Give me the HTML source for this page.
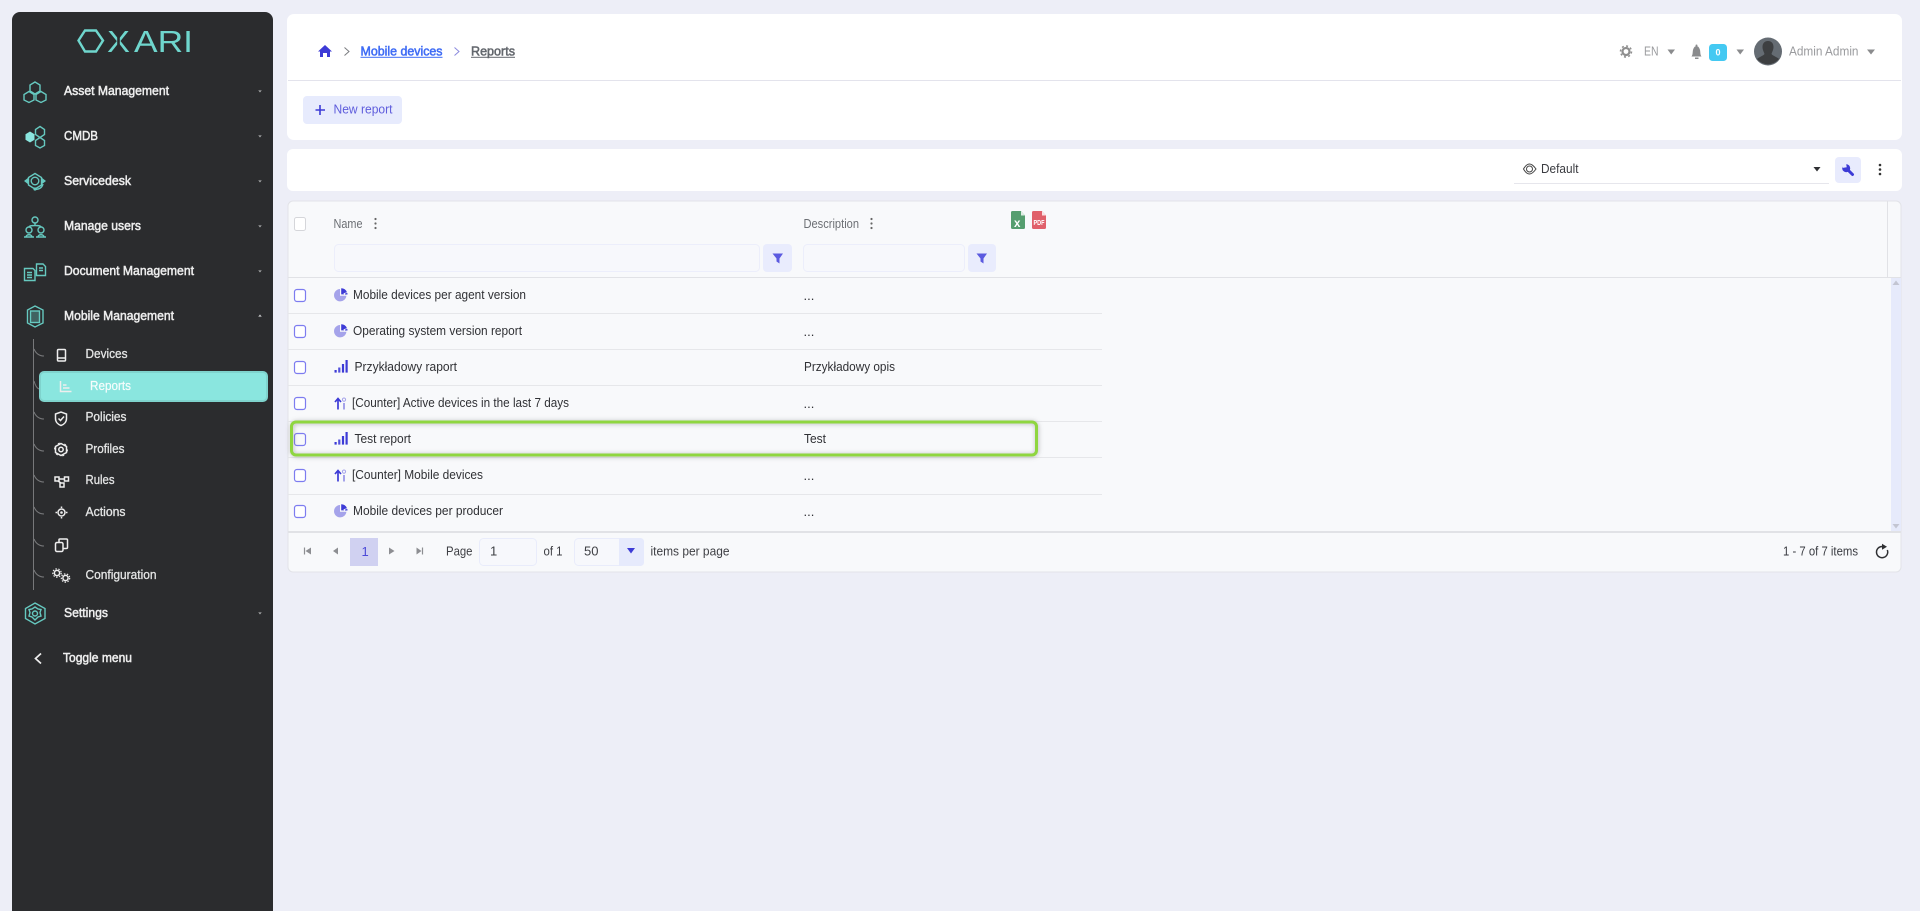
<!DOCTYPE html>
<html lang="en">
<head>
<meta charset="utf-8">
<title>Reports</title>
<style>
html,body{margin:0;padding:0;width:1920px;height:911px;overflow:hidden;background:#edeef7;}
svg{position:absolute;left:0;top:0;display:block;font-family:"Liberation Sans",sans-serif;}
.m{font-size:13px;fill:#eeeeee;stroke:#eeeeee;stroke-width:.5px;}
.s{font-size:13px;fill:#e4e5e5;stroke:#e4e5e5;stroke-width:.3px;}
.t{font-size:13px;fill:#303135;}
.h{font-size:12.5px;fill:#6c6f74;}
.f{font-size:13px;fill:#3e3f44;}
.i{fill:none;stroke:#66c9c0;stroke-width:1.4;}
.w{fill:none;stroke:#eeeeee;stroke-width:1.5;}
.ln{stroke:#e6e7ea;stroke-width:1;}
.cb{fill:#fff;stroke:#7d7cf0;stroke-width:1.2;}
.br{stroke:#77787a;stroke-width:1;fill:none;}
</style>
</head>
<body>
<svg width="1920" height="911" viewBox="0 0 1920 911" xmlns="http://www.w3.org/2000/svg">
<defs>
<filter id="sh" x="-5%" y="-40%" width="110%" height="180%"><feGaussianBlur stdDeviation="2.5"/></filter>
<g id="pieI"><path d="M6 1A6.200 6.200 0 1 0 12.400 7.800L6 7.800Z" fill="#a5a3ea"/><path d="M7.200 0.300A6.500 6.500 0 0 1 13 4.200L9.500 5.200L10 6.400H7.200Z" fill="#3d3bd6"/><path d="M10.800 5.600L13.300 4.900A6 6 0 0 1 13.500 6.500H11Z" fill="#3d3bd6"/></g>
<g id="bars"><rect x="0" y="10" width="2.200" height="2.600" fill="#3d3bd6"/><rect x="3.700" y="7.500" width="2.200" height="5.100" fill="#5250dc"/><rect x="7.400" y="4" width="2.200" height="8.600" fill="#3d3bd6"/><rect x="11" y="0" width="2.200" height="12.600" fill="#3d3bd6"/></g>
<g id="cnt"><path d="M4 12.500V2.500M1 5L4 1.500L7 5" fill="none" stroke="#3d3bd6" stroke-width="1.700"/><circle cx="10" cy="2.600" r="1.600" fill="none" stroke="#a5a3ea" stroke-width="1"/><path d="M10 6V12.500" stroke="#a5a3ea" stroke-width="2"/></g>
<path id="chev" d="M-1.200 -.8L0 .8L1.200 -.8" fill="none" stroke="#a9aaab" stroke-width=".9"/>
</defs>

<!-- sidebar -->
<rect x="12" y="12" width="261" height="915" rx="8" fill="#2b2c2e"/>
<path d="M85 30.500H96L103 40.500L96 51.500H85L78.500 40.500Z" fill="none" stroke="#6fd6cd" stroke-width="2.400"/>
<text x="107" y="52" font-size="31" fill="#6fd6cd" textLength="23" lengthAdjust="spacingAndGlyphs">X</text>
<rect x="117.200" y="28" width="2.600" height="26" fill="#2b2c2e"/>
<text x="134" y="52" font-size="31" fill="#6fd6cd" textLength="59" lengthAdjust="spacingAndGlyphs">ARI</text>

<!-- main menu icons -->
<g class="i">
<path d="M35 82L40 85V91L35 94L30 91V85Z"/><path d="M29 91.500L34 94.500V100L29 102.500L24 100V94.500Z"/><path d="M41 91.500L46 94.500V100L41 102.500L36 100V94.500Z"/>
<path d="M40 126.500L44.500 129.500V134.500L40 137.500L35.500 134.500V129.500Z"/><path d="M40 137.500L44.500 140.500V145.500L40 148L35.500 145.500V140.500Z"/>
<path d="M35 173.500L41.500 177.500V185L35 189L28.500 185V177.500Z"/><circle cx="35" cy="181" r="3.800"/><path d="M35 189.500C39 189.500 42 188 43 184"/>
<circle cx="35" cy="220" r="3"/><circle cx="29" cy="230" r="3"/><circle cx="41" cy="230" r="3"/><path d="M35 223V225M29 227C29 225 41 225 41 227M24 237H34M36 237H46M26 237C26 234 32 234 32 237M38 237C38 234 44 234 44 237"/>
<path d="M24.500 268.500H33L35 270.500V280.500H24.500Z"/><path d="M27 272.500H32M27 275H32M27 277.500H32"/><path d="M36.500 264H43L45.500 266.500V275.500H36.500Z"/><path d="M39 268H43M39 270.500H43"/>
<path d="M35 306L43 310V323L35 327L27.500 323V310Z"/><rect x="30.500" y="311" width="9" height="11.500" fill="#66c9c0" fill-opacity=".35"/>
<path d="M35 603L45 608.500V618.500L35 624L25.500 618.500V608.500Z"/><circle cx="35" cy="613.500" r="2.500"/><path d="M35 607L38 609L41 609.500L40 612.500L41 616L38 617L35 620L32 617L29 616L30 612.500L29 609.500L32 609Z"/>
</g>
<path d="M30 131.500L34.500 134.200V139.800L30 142.500L25.500 139.800V134.200Z" fill="#8ae6df"/>
<path d="M28.500 177.500L24 181L28.500 184.500ZM41.500 177.500L46 181L41.500 184.500Z" fill="#66c9c0"/>
<circle cx="35" cy="189" r="1.600" fill="#66c9c0"/>

<text class="m" x="64" y="95" textLength="105" lengthAdjust="spacingAndGlyphs">Asset Management</text>
<text class="m" x="64" y="140" textLength="34" lengthAdjust="spacingAndGlyphs">CMDB</text>
<text class="m" x="64" y="185" textLength="67" lengthAdjust="spacingAndGlyphs">Servicedesk</text>
<text class="m" x="64" y="230" textLength="77" lengthAdjust="spacingAndGlyphs">Manage users</text>
<text class="m" x="64" y="275" textLength="130" lengthAdjust="spacingAndGlyphs">Document Management</text>
<text class="m" x="64" y="320" textLength="110" lengthAdjust="spacingAndGlyphs">Mobile Management</text>
<text class="m" x="64" y="617" textLength="44" lengthAdjust="spacingAndGlyphs">Settings</text>
<text class="m" x="63" y="662" textLength="69" lengthAdjust="spacingAndGlyphs">Toggle menu</text>
<path d="M41 653.500L35.500 658.500L41 663.500" fill="none" stroke="#eeeeee" stroke-width="1.700"/>
<use href="#chev" x="260" y="91"/><use href="#chev" x="260" y="136"/><use href="#chev" x="260" y="181"/><use href="#chev" x="260" y="226"/><use href="#chev" x="260" y="271"/><use href="#chev" x="260" y="613"/>
<path d="M258.800 316.800L260 315.200L261.200 316.800" fill="none" stroke="#c5c6c7" stroke-width="1"/>

<!-- tree -->
<path class="br" d="M33.500 339V590"/>
<path class="br" d="M34 349Q37 356 44 356"/><path class="br" d="M34 381Q36 388 39 389"/><path class="br" d="M34 412Q37 419 44 419"/><path class="br" d="M34 444Q37 451 44 451"/><path class="br" d="M34 475Q37 482 44 482"/><path class="br" d="M34 507Q37 514 44 514"/><path class="br" d="M34 539Q37 546 44 546"/><path class="br" d="M34 570Q37 577 44 577"/>

<rect x="40" y="372" width="227" height="29" rx="4" fill="#8ae6df" stroke="#7fd3cd" stroke-width="2"/>

<!-- sub icons -->
<g class="w">
<rect x="57.500" y="349.500" width="8" height="11.500" rx="1"/>
<path d="M57.500 358H65.500"/>
<path d="M60.500 381V391.500H71.500M63 385H66.500M63 388H69.500"/>
<path d="M55.500 414L61 412L66.500 414V418.500C66.500 422 64 424.500 61 425.500C58 424.500 55.500 422 55.500 418.500Z"/><path d="M58.500 418.500L60.500 420.500L64 416.500"/>
<path d="M61 443.500L66.500 446.500V452.500L61 455.500L55.500 452.500V446.500Z"/><circle cx="61" cy="449.500" r="2.200"/>
<rect x="55" y="477" width="4" height="4"/><rect x="64.500" y="477" width="4" height="4"/><rect x="60" y="483" width="4" height="4"/><path d="M59 479H64.500M58 481L61 483"/>
<circle cx="61.500" cy="512.500" r="3.500"/>
<path d="M61.500 506.500V508M61.500 517V518.500M55.500 512.500H57M66 512.500H67.500"/>
<rect x="55.500" y="542.500" width="7.500" height="9" rx="1.500"/><path d="M59 542V539.500Q59 539 60 539H66.500Q67.500 539 67.500 540V547.500Q67.500 548.500 66 548.500H63"/>
<circle cx="57" cy="573" r="2.600"/><circle cx="65.500" cy="578" r="2.600"/>
</g>
<circle cx="57" cy="573" r="4.200" fill="none" stroke="#eee" stroke-width="1.200" stroke-dasharray="1.500 1.500"/>
<circle cx="65.500" cy="578" r="4.200" fill="none" stroke="#eee" stroke-width="1.200" stroke-dasharray="1.500 1.500"/>
<circle cx="61.500" cy="512.500" r="1.300" fill="#eee"/>
<circle cx="61" cy="449.500" r="6.500" fill="none" stroke="#eee" stroke-width="1" stroke-dasharray="2 4.800"/>

<text class="s" x="85.500" y="358" textLength="42" lengthAdjust="spacingAndGlyphs">Devices</text>
<text x="90" y="390" font-size="13" fill="#f6fdfc" stroke="#f6fdfc" stroke-width=".2" textLength="41" lengthAdjust="spacingAndGlyphs">Reports</text>
<text class="s" x="85.500" y="421" textLength="41" lengthAdjust="spacingAndGlyphs">Policies</text>
<text class="s" x="85.500" y="453" textLength="39" lengthAdjust="spacingAndGlyphs">Profiles</text>
<text class="s" x="85.500" y="484" textLength="29" lengthAdjust="spacingAndGlyphs">Rules</text>
<text class="s" x="85.500" y="516" textLength="40" lengthAdjust="spacingAndGlyphs">Actions</text>
<text class="s" x="85.500" y="579" textLength="71" lengthAdjust="spacingAndGlyphs">Configuration</text>

<!-- header card -->
<rect x="287" y="14" width="1615" height="126" rx="7" fill="#fff"/>
<rect x="288" y="80" width="1613" height="1" fill="#e3e3ec"/>
<path d="M325 45L332 51.500H330V57H327V53H323V57H320V51.500H318Z" fill="#3d3bd6"/>
<path d="M344.500 47.500L349 51.500L344.500 55.500" fill="none" stroke="#7a7c80" stroke-width="1"/>
<text x="360.500" y="55.500" font-size="13" fill="#3f6cf5" stroke="#3f6cf5" stroke-width=".55" textLength="82" lengthAdjust="spacingAndGlyphs">Mobile devices</text>
<rect x="360.500" y="56.800" width="82" height="1" fill="#3f6cf5"/>
<path d="M454.500 47.500L459 51.500L454.500 55.500" fill="none" stroke="#8b8ade" stroke-width="1"/>
<text x="471" y="55.500" font-size="13" fill="#63676d" stroke="#63676d" stroke-width=".55" textLength="44" lengthAdjust="spacingAndGlyphs">Reports</text>
<rect x="471" y="56.800" width="44" height="1" fill="#63676d"/>

<rect x="303" y="96" width="99" height="28" rx="4" fill="#e7ebfd"/>
<path d="M320 105V115M315.500 110H325" stroke="#3d3bd6" stroke-width="1.600"/>
<text x="333.500" y="113.500" font-size="13" fill="#5e5cdc" textLength="59" lengthAdjust="spacingAndGlyphs">New report</text>

<!-- top right -->
<circle cx="1626" cy="51.500" r="3.500" fill="none" stroke="#8f8f8f" stroke-width="2.200"/>
<circle cx="1626" cy="51.500" r="5.500" fill="none" stroke="#8f8f8f" stroke-width="1.500" stroke-dasharray="2 2.300"/>
<text x="1644" y="55.500" font-size="13" fill="#9a9b9e" textLength="14.500" lengthAdjust="spacingAndGlyphs">EN</text>
<path d="M1667.500 49.500H1675L1671.200 54.500Z" fill="#8a8b8d"/>
<path d="M1691.500 56.500C1693 54.500 1692.500 52 1693 50C1693.500 47.800 1695 46 1696.500 46C1698 46 1699.500 47.800 1700 50C1700.500 52 1700 54.500 1701.500 56.500Z" fill="#8a8b8d"/><rect x="1695" y="57.500" width="3.500" height="1.500" fill="#8a8b8d"/><circle cx="1696.500" cy="45.500" r="1" fill="#8a8b8d"/>
<rect x="1709" y="44" width="18" height="17" rx="3.500" fill="#44c9f2"/>
<text x="1715.500" y="55.500" font-size="9" font-weight="700" fill="#fff">0</text>
<path d="M1736.500 49.500H1744L1740.200 54.500Z" fill="#8a8b8d"/>
<circle cx="1768" cy="51.500" r="14" fill="#656c73"/>
<path d="M1768 41C1772 41 1773.500 44 1773.500 47C1773.500 50 1772 52 1771.500 54C1773 56 1777 57 1779 59A14 14 0 0 1 1757 59C1759 57 1763 56 1764.500 54C1764 52 1762.500 50 1762.500 47C1762.500 44 1764 41 1768 41Z" fill="#3d3f41"/>
<text x="1789" y="55.500" font-size="13" fill="#9a9b9e" textLength="69.500" lengthAdjust="spacingAndGlyphs">Admin Admin</text>
<path d="M1867 49.500H1875L1871 54.500Z" fill="#8a8b8d"/>

<!-- toolbar card -->
<rect x="287" y="149" width="1615" height="42" rx="6" fill="#fff"/>
<path d="M1523.500 169C1525.500 165.500 1527.500 164 1529.500 164C1531.500 164 1533.500 165.500 1536 169C1533.500 172.500 1531.500 174 1529.500 174C1527.500 174 1525.500 172.500 1523.500 169Z" fill="none" stroke="#444" stroke-width="1"/>
<circle cx="1529.500" cy="169" r="3" fill="none" stroke="#444" stroke-width="1"/>
<text x="1541" y="173" font-size="13" fill="#3a3b40" textLength="37.500" lengthAdjust="spacingAndGlyphs">Default</text>
<path d="M1813.500 167H1820.500L1817 171.500Z" fill="#2f3033"/>
<rect x="1514" y="183" width="315" height="1" fill="#e6e6ec"/>
<rect x="1835" y="157" width="26" height="26" rx="4" fill="#e8ebfd"/>
<circle cx="1846.200" cy="168.200" r="4" fill="#3d3bd6"/>
<path d="M1847.500 169.500L1852.500 174.500" stroke="#3d3bd6" stroke-width="3" stroke-linecap="round"/>
<path d="M1842.500 163.500L1846.500 163.800L1846.500 167.500L1842.500 167.500Z" transform="rotate(-10 1845 166)" fill="#e8ebfd"/>
<circle cx="1880" cy="165" r="1.300" fill="#333"/><circle cx="1880" cy="169.500" r="1.300" fill="#333"/><circle cx="1880" cy="174" r="1.300" fill="#333"/>

<!-- grid -->
<rect x="288" y="201" width="1613" height="371" rx="5" fill="#f8f9fb" stroke="#e2e3e8" stroke-width="1"/>
<rect x="288" y="277" width="1613" height="1" fill="#e1e2e6"/>
<rect x="1887" y="201" width="1" height="76" fill="#e1e2e6"/>
<rect x="1891" y="278" width="10" height="253" fill="#e6eafb"/>
<path d="M1892.500 285H1899.500L1896 280.500Z" fill="#c3c5d2"/>
<path d="M1892.500 524H1899.500L1896 528.500Z" fill="#c3c5d2"/>
<rect x="288" y="531" width="1613" height="2" fill="#e1e2e6"/>

<!-- head -->
<rect x="294.500" y="217.500" width="11" height="13" rx="2" fill="#fff" stroke="#d5d6da" stroke-width="1"/>
<text class="h" x="333.500" y="228" textLength="29" lengthAdjust="spacingAndGlyphs">Name</text>
<circle cx="375.500" cy="219" r="1.100" fill="#666"/><circle cx="375.500" cy="223.500" r="1.100" fill="#666"/><circle cx="375.500" cy="228" r="1.100" fill="#666"/>
<rect x="334.500" y="244.500" width="425" height="27" rx="4" fill="#f7f8fc" stroke="#eceefb" stroke-width="1"/>
<rect x="763" y="244" width="29" height="28" rx="4" fill="#e9ecfd"/>
<path d="M772.500 253.500H783L779.500 258.500V263.500L776.500 261.500V258.500Z" fill="#5b5ae0"/>
<text class="h" x="803.500" y="228" textLength="55.500" lengthAdjust="spacingAndGlyphs">Description</text>
<circle cx="871.500" cy="219" r="1.100" fill="#666"/><circle cx="871.500" cy="223.500" r="1.100" fill="#666"/><circle cx="871.500" cy="228" r="1.100" fill="#666"/>
<rect x="803.500" y="244.500" width="161" height="27" rx="4" fill="#f7f8fc" stroke="#eceefb" stroke-width="1"/>
<rect x="968" y="244" width="28" height="28" rx="4" fill="#e9ecfd"/>
<path d="M976.500 253.500H987L983.500 258.500V263.500L980.500 261.500V258.500Z" fill="#5b5ae0"/>
<path d="M1012.500 211H1021L1025 215.500V227.500Q1025 229 1023.500 229H1012.500Q1011 229 1011 227.500V212.500Q1011 211 1012.500 211Z" fill="#559e6f"/>
<path d="M1021 211V215.500H1025Z" fill="#dfeee4"/>
<text x="1014" y="227" font-size="11.500" font-weight="700" fill="#fff">x</text>
<path d="M1033.500 211H1042L1046 215.500V227.500Q1046 229 1044.500 229H1033.500Q1032 229 1032 227.500V212.500Q1032 211 1033.500 211Z" fill="#e0616b"/>
<path d="M1042 211V215.500H1046Z" fill="#fbe3e5"/>
<text x="1033.500" y="225" font-size="7" font-weight="700" fill="#fff" textLength="11" lengthAdjust="spacingAndGlyphs">PDF</text>

<!-- row lines -->
<g class="ln">
<path d="M288 313.500H1102M288 349.500H1102M288 385.500H1102M288 421.500H1102M288 457.500H1102M288 494.500H1102"/>
</g>

<!-- rows -->
<rect x="294.500" y="289.500" width="11" height="12" rx="2.500" class="cb"/>
<rect x="294.500" y="325.500" width="11" height="12" rx="2.500" class="cb"/>
<rect x="294.500" y="361.500" width="11" height="12" rx="2.500" class="cb"/>
<rect x="294.500" y="397.500" width="11" height="12" rx="2.500" class="cb"/>
<rect x="294.500" y="433.500" width="11" height="12" rx="2.500" class="cb" fill-opacity="0"/>
<rect x="294.500" y="469.500" width="11" height="12" rx="2.500" class="cb"/>
<rect x="294.500" y="505.500" width="11" height="12" rx="2.500" class="cb"/>

<use href="#pieI" x="334" y="288"/>
<use href="#pieI" x="334" y="324"/>
<use href="#bars" x="334.500" y="360"/>
<use href="#cnt" x="334" y="397"/>
<use href="#bars" x="334.500" y="432"/>
<use href="#cnt" x="334" y="469"/>
<use href="#pieI" x="334" y="504"/>

<text class="t" x="353" y="299" textLength="173" lengthAdjust="spacingAndGlyphs">Mobile devices per agent version</text>
<text class="t" x="353" y="335" textLength="169" lengthAdjust="spacingAndGlyphs">Operating system version report</text>
<text class="t" x="354.500" y="371" textLength="102.500" lengthAdjust="spacingAndGlyphs">Przykładowy raport</text>
<text class="t" x="352" y="407" textLength="217" lengthAdjust="spacingAndGlyphs">[Counter] Active devices in the last 7 days</text>
<text class="t" x="354.500" y="443" textLength="56.500" lengthAdjust="spacingAndGlyphs">Test report</text>
<text class="t" x="352" y="479" textLength="131" lengthAdjust="spacingAndGlyphs">[Counter] Mobile devices</text>
<text class="t" x="353" y="515" textLength="150" lengthAdjust="spacingAndGlyphs">Mobile devices per producer</text>
<text class="t" x="803.500" y="300">...</text>
<text class="t" x="803.500" y="336">...</text>
<text class="t" x="804" y="371" textLength="91" lengthAdjust="spacingAndGlyphs">Przykładowy opis</text>
<text class="t" x="803.500" y="408">...</text>
<text class="t" x="804" y="443" textLength="22" lengthAdjust="spacingAndGlyphs">Test</text>
<text class="t" x="803.500" y="480">...</text>
<text class="t" x="803.500" y="516">...</text>

<!-- highlight -->
<rect x="292" y="422.500" width="745" height="33" rx="5" fill="none" stroke="#777" stroke-opacity=".55" stroke-width="3" filter="url(#sh)"/>
<rect x="291.500" y="422" width="745" height="33" rx="4.500" fill="none" stroke="#8fd640" stroke-width="3"/>

<!-- pager -->
<path d="M304.500 547.500V554.500" stroke="#8d8e92" stroke-width="1.200"/>
<path d="M311 547.500L305.500 551L311 554.500Z" fill="#8d8e92"/>
<path d="M338 547.500L333 551L338 554.500Z" fill="#8d8e92"/>
<rect x="350" y="538" width="28" height="28" fill="#d0d1f1"/>
<text x="361.500" y="556" font-size="13" fill="#4c4ad8">1</text>
<path d="M389 547.500L394.500 551L389 554.500Z" fill="#8d8e92"/>
<path d="M416.500 547.500L421.500 551L416.500 554.500Z" fill="#8d8e92"/>
<path d="M422.500 547.500V554.500" stroke="#8d8e92" stroke-width="1.200"/>
<text class="f" x="446" y="555.500" textLength="26.500" lengthAdjust="spacingAndGlyphs">Page</text>
<rect x="479.500" y="538.500" width="57" height="27" rx="4" fill="#f7f8fc" stroke="#e9ecfb" stroke-width="1"/>
<text class="f" x="490" y="555.500">1</text>
<text class="f" x="543.500" y="555.500" textLength="19" lengthAdjust="spacingAndGlyphs">of 1</text>
<rect x="574.500" y="538.500" width="69" height="27" rx="4" fill="#f7f8fc" stroke="#e9ecfb" stroke-width="1"/>
<path d="M619 538H640Q644 538 644 542V562Q644 566 640 566H619Z" fill="#e6eafc"/>
<text class="f" x="584" y="555.500">50</text>
<path d="M627 548H635L631 553.500Z" fill="#3d3bd6"/>
<text class="f" x="650.500" y="555.500" textLength="79" lengthAdjust="spacingAndGlyphs">items per page</text>
<text x="1783" y="555.500" font-size="12.500" fill="#3a3c42" textLength="75" lengthAdjust="spacingAndGlyphs">1 - 7 of 7 items</text>
<path d="M1882.500 546.500A5.600 5.600 0 1 0 1887.300 550" fill="none" stroke="#2f3033" stroke-width="1.500"/>
<path d="M1882 543.800L1887 546.800L1882 549.800Z" fill="#2f3033"/>
</svg>
</body>
</html>
